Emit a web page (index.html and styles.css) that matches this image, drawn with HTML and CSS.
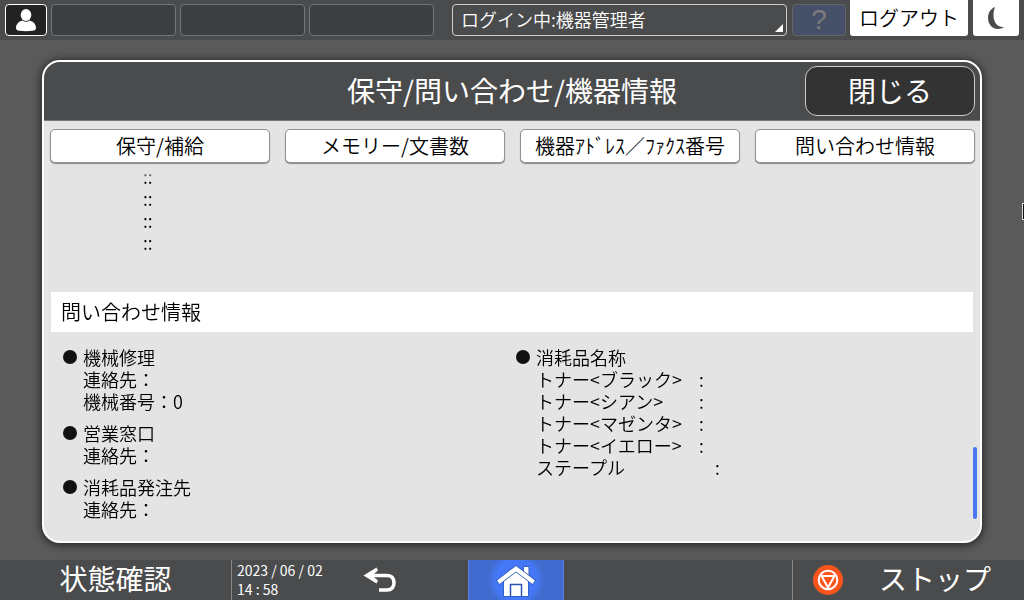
FILE: index.html
```html
<!DOCTYPE html>
<html lang="ja">
<head>
    <meta charset="UTF-8">
    <meta name="viewport" content="width=device-width, initial-scale=1.0">
    <title>保守/問い合わせ/機器情報</title>
    <link rel="stylesheet" href="styles.css">
</head>
<body>
    <!-- Top bar -->
    <header class="topbar">
        <button type="button" class="user-btn" aria-label="ユーザー">
            <svg width="20" height="23" viewBox="0 0 20 23" fill="#fff">
                <ellipse cx="10" cy="6" rx="5.3" ry="6"/>
                <path d="M6.5 11.6 Q10 14 13.5 11.6 C17.500 12.500 20 15.500 20 19 Q20 21.500 16.500 21.800 Q10 22.600 3.500 21.800 Q0 21.500 0 19 C0 15.500 2.500 12.500 6.500 11.600Z"/>
            </svg>
        </button>
        <div class="slot"></div>
        <div class="slot"></div>
        <div class="slot"></div>
        <div class="login">
            <select class="login-select" aria-label="ログイン中">
                <option>ログイン中:機器管理者</option>
            </select>
        </div>
        <button type="button" class="help-btn" disabled>?</button>
        <button type="button" class="logout-btn">ログアウト</button>
        <button type="button" class="sleep-btn" aria-label="スリープ">
            <svg width="18" height="24" viewBox="0 0 18 24" fill="#4a4b4d">
                <path d="M8 1 C3 3 1 7.500 1 12 C1 18.500 5.500 23 11 23 C13.500 23 15.500 22.300 17 21 C10.500 21.500 6.500 16.500 6.500 9.500 C6.500 6 7 3.500 8 1Z"/>
            </svg>
        </button>
    </header>

    <main class="stage">
        <section class="panel">
            <div class="panel-head">
                <h1>保守/問い合わせ/機器情報</h1>
                <button type="button" class="close-btn">閉じる</button>
            </div>

            <nav class="tabs">
                <button type="button">保守/補給</button>
                <button type="button">メモリー/文書数</button>
                <button type="button">機器ｱﾄﾞﾚｽ／ﾌｧｸｽ番号</button>
                <button type="button">問い合わせ情報</button>
            </nav>

            <div class="content">
                <div class="previous">
                    <div>::</div>
                    <div>::</div>
                    <div>::</div>
                    <div>::</div>
                </div>

                <h2>問い合わせ情報</h2>

                <div class="columns">
                    <div class="column">
                        <div class="group">
                            <h3>機械修理</h3>
                            <p>連絡先：</p>
                            <p>機械番号：0</p>
                        </div>
                        <div class="group">
                            <h3>営業窓口</h3>
                            <p>連絡先：</p>
                        </div>
                        <div class="group">
                            <h3>消耗品発注先</h3>
                            <p>連絡先：</p>
                        </div>
                    </div>
                    <div class="column">
                        <div class="group supplies">
                            <h3>消耗品名称</h3>
                            <p><span class="label">トナー&lt;ブラック&gt;</span>:</p>
                            <p><span class="label">トナー&lt;シアン&gt;</span>:</p>
                            <p><span class="label">トナー&lt;マゼンタ&gt;</span>:</p>
                            <p><span class="label">トナー&lt;イエロー&gt;</span>:</p>
                            <p><span class="label wide">ステープル</span>:</p>
                        </div>
                    </div>
                </div>
            </div>
            <div class="scroll-thumb"></div>
        </section>
        <div class="edge-marker"></div>
    </main>

    <!-- Bottom bar -->
    <footer class="bottombar">
        <button type="button" class="status-btn">状態確認</button>
        <div class="clock">
            <div>2023 / 06 / 02</div>
            <div>14 : 58</div>
        </div>
        <button type="button" class="back-btn" aria-label="戻る">
            <svg width="34" height="26" viewBox="0 0 34 26">
                <path d="M4 8.500 H24 C29 8.500 31 12 31 15.500 C31 20 28.500 23 24 23 H16" fill="none" stroke="#fff" stroke-width="3.600"/>
                <path d="M0.500 8.500 L13.500 0.500 L15 3.500 L9 8.500 L15 13.500 L13.500 16.500Z" fill="#fff"/>
            </svg>
        </button>
        <button type="button" class="home-btn" aria-label="ホーム">
            <svg width="40" height="32" viewBox="0 0 40 32">
                <g fill="#fff" stroke="#2c55b4" stroke-width="1.500" paint-order="stroke">
                    <path d="M28 2 H32.500 V12 L28 8.500Z"/>
                    <path d="M8 16 L20 6.500 L32 16 V31 H8Z"/>
                    <path d="M20 1 L39 15.500 L36.500 19 L20 6.500 L3.500 19 L1 15.500Z"/>
                </g>
                <path d="M14.500 31 V19.500 H25.500 V31" fill="none" stroke="#2c55b4" stroke-width="1.500"/>
            </svg>
        </button>
        <button type="button" class="stop-btn">
            <svg width="30" height="30" viewBox="0 0 30 30">
                <circle cx="15" cy="15" r="15" fill="#fb551d"/>
                <g fill="none" stroke="#fff" stroke-width="2">
                    <circle cx="15" cy="15" r="9.300"/>
                    <path d="M8.500 11 H21.500 L15 22.500Z" stroke-linejoin="round"/>
                </g>
            </svg>
            <span>ストップ</span>
        </button>
    </footer>
</body>
</html>
```

FILE: styles.css
```css
* { box-sizing: border-box; }
body {
    margin: 0;
    min-height: 100vh;
    display: flex;
    flex-direction: column;
    background: #5a5a5a;
    color: #000;
    font-family: "Noto Sans CJK JP", sans-serif;
    font-size: 18px;
    font-weight: 350;
    line-height: 22px;
}
h1, h2, h3, p { margin: 0; font-weight: inherit; }
button, select { font: inherit; color: inherit; padding: 0; margin: 0; }
svg { display: block; flex: none; }

/* Top bar */
.topbar { display: flex; gap: 4px; height: 40px; padding: 0 5px; background: #4a4b4c; }
.user-btn, .slot, .login, .help-btn { height: 32px; margin-top: 4px; border-radius: 4px; }
.user-btn { width: 42px; background: #222; border: 1px solid #fff; display: flex; align-items: center; justify-content: center; }
.slot { width: 125px; background: #3e3f40; border: 1px solid #747576; }
.login { flex: 1; position: relative; margin-left: 14px; margin-right: 1px; border: 1px solid #ccc; }
.login-select {
    display: block;
    width: 100%;
    height: 28px;
    padding: 0 8px;
    appearance: none;
    background: none;
    border: none;
    color: #fff;
}
.login::after {
    content: "";
    position: absolute;
    right: 3px;
    bottom: 3px;
    border: 4px solid #fff;
    border-top-color: transparent;
    border-left-color: transparent;
}
.help-btn { width: 54px; background: #465069; border: 1px solid #666; color: #7d7d7d; font-family: "Liberation Sans", sans-serif; font-size: 28px; font-weight: 400; line-height: 28px; }
.logout-btn, .sleep-btn { height: 36px; background: #fff; border: none; border-radius: 0 0 3px 3px; }
.logout-btn { width: 118px; font-size: 20px; }
.sleep-btn { width: 46px; margin-left: 1px; display: flex; align-items: center; justify-content: center; }

/* Dialog */
.stage { flex: 1; display: flex; position: relative; padding: 20px 42px 17px; }
.panel {
    flex: 1;
    position: relative;
    display: flex;
    flex-direction: column;
    background: #e4e4e4;
    border: 2px solid #fff;
    border-radius: 18px;
    box-shadow: 0 1px 8px 1px rgba(0, 0, 0, 0.6);
}
.panel-head {
    display: grid;
    grid-template-columns: 1fr auto 1fr;
    align-items: center;
    height: 59px;
    padding: 0 5px;
    background: #4a4b4c;
    border-bottom: 1px solid #777;
    border-radius: 16px 16px 0 0;
    color: #fff;
}
.panel-head h1 { grid-column: 2; padding-bottom: 3px; font-size: 28px; font-weight: 400; }
.close-btn { justify-self: end; width: 170px; height: 50px; padding-bottom: 3px; background: #333; border: 1px solid #ccc; border-radius: 12px; font-size: 28px; font-weight: 400; }
.tabs { display: grid; grid-template-columns: repeat(4, 1fr); gap: 15px; padding: 8px 5px 0 6px; }
.tabs button { height: 34px; background: #fff; border: 1px solid #929292; border-radius: 5px; box-shadow: 0 1px 1px rgba(0, 0, 0, 0.4); font-size: 20px; }

/* Scrolled content, fades out under the tabs */
.content { flex: 1; padding: 2px 7px 0; mask-image: linear-gradient(transparent 8px, #000 16px); }
.previous { height: 127px; padding-left: 92px; }
.content h2 { padding: 9px 10px; background: #fff; font-size: 20px; }
.columns { display: grid; grid-template-columns: 1fr 1fr; padding: 14px 4px 0 12px; }
.group { margin-bottom: 10px; padding-left: 20px; }
.group h3 { font-size: 18px; display: flex; align-items: center; }
.group h3::before { content: ""; width: 14px; height: 14px; margin: 0 6px 0 -20px; border-radius: 50%; background: #111; }
.label { display: inline-block; width: 163px; }
.label.wide { width: 179px; }
.scroll-thumb { position: absolute; right: 3px; bottom: 22px; width: 4px; height: 72px; border-radius: 2px; background: #4a78f0; }
.edge-marker { position: absolute; top: 163px; right: 0; width: 2px; height: 17px; background: #111; border: 1px solid #ddd; border-right: none; }

/* Bottom bar */
.bottombar {
    display: grid;
    grid-template-columns: 232fr 104fr 88fr 44fr 96fr 228fr 232fr;
    height: 40px;
    background: #4a4b4c;
    color: #fff;
}
.bottombar button { background: none; border: none; }
.bottombar .status-btn { padding-bottom: 4px; border-right: 1px solid #888; font-size: 28px; font-weight: 400; }
.clock { padding: 1px 5px; font-size: 14px; font-weight: 400; line-height: 19px; white-space: nowrap; }
.back-btn, .home-btn { display: flex; align-items: center; justify-content: center; }
.bottombar .home-btn { grid-column: 5; padding-top: 1px; background: radial-gradient(circle, #4478f8 20px, #426bd0 28px); border: 1px solid #5a80e0; border-width: 0 1px; }
.bottombar .stop-btn { grid-column: 7; display: flex; align-items: center; gap: 36px; padding-left: 20px; border-left: 1px solid #888; font-size: 28px; font-weight: 400; }
.stop-btn span { padding-bottom: 4px; }
```
